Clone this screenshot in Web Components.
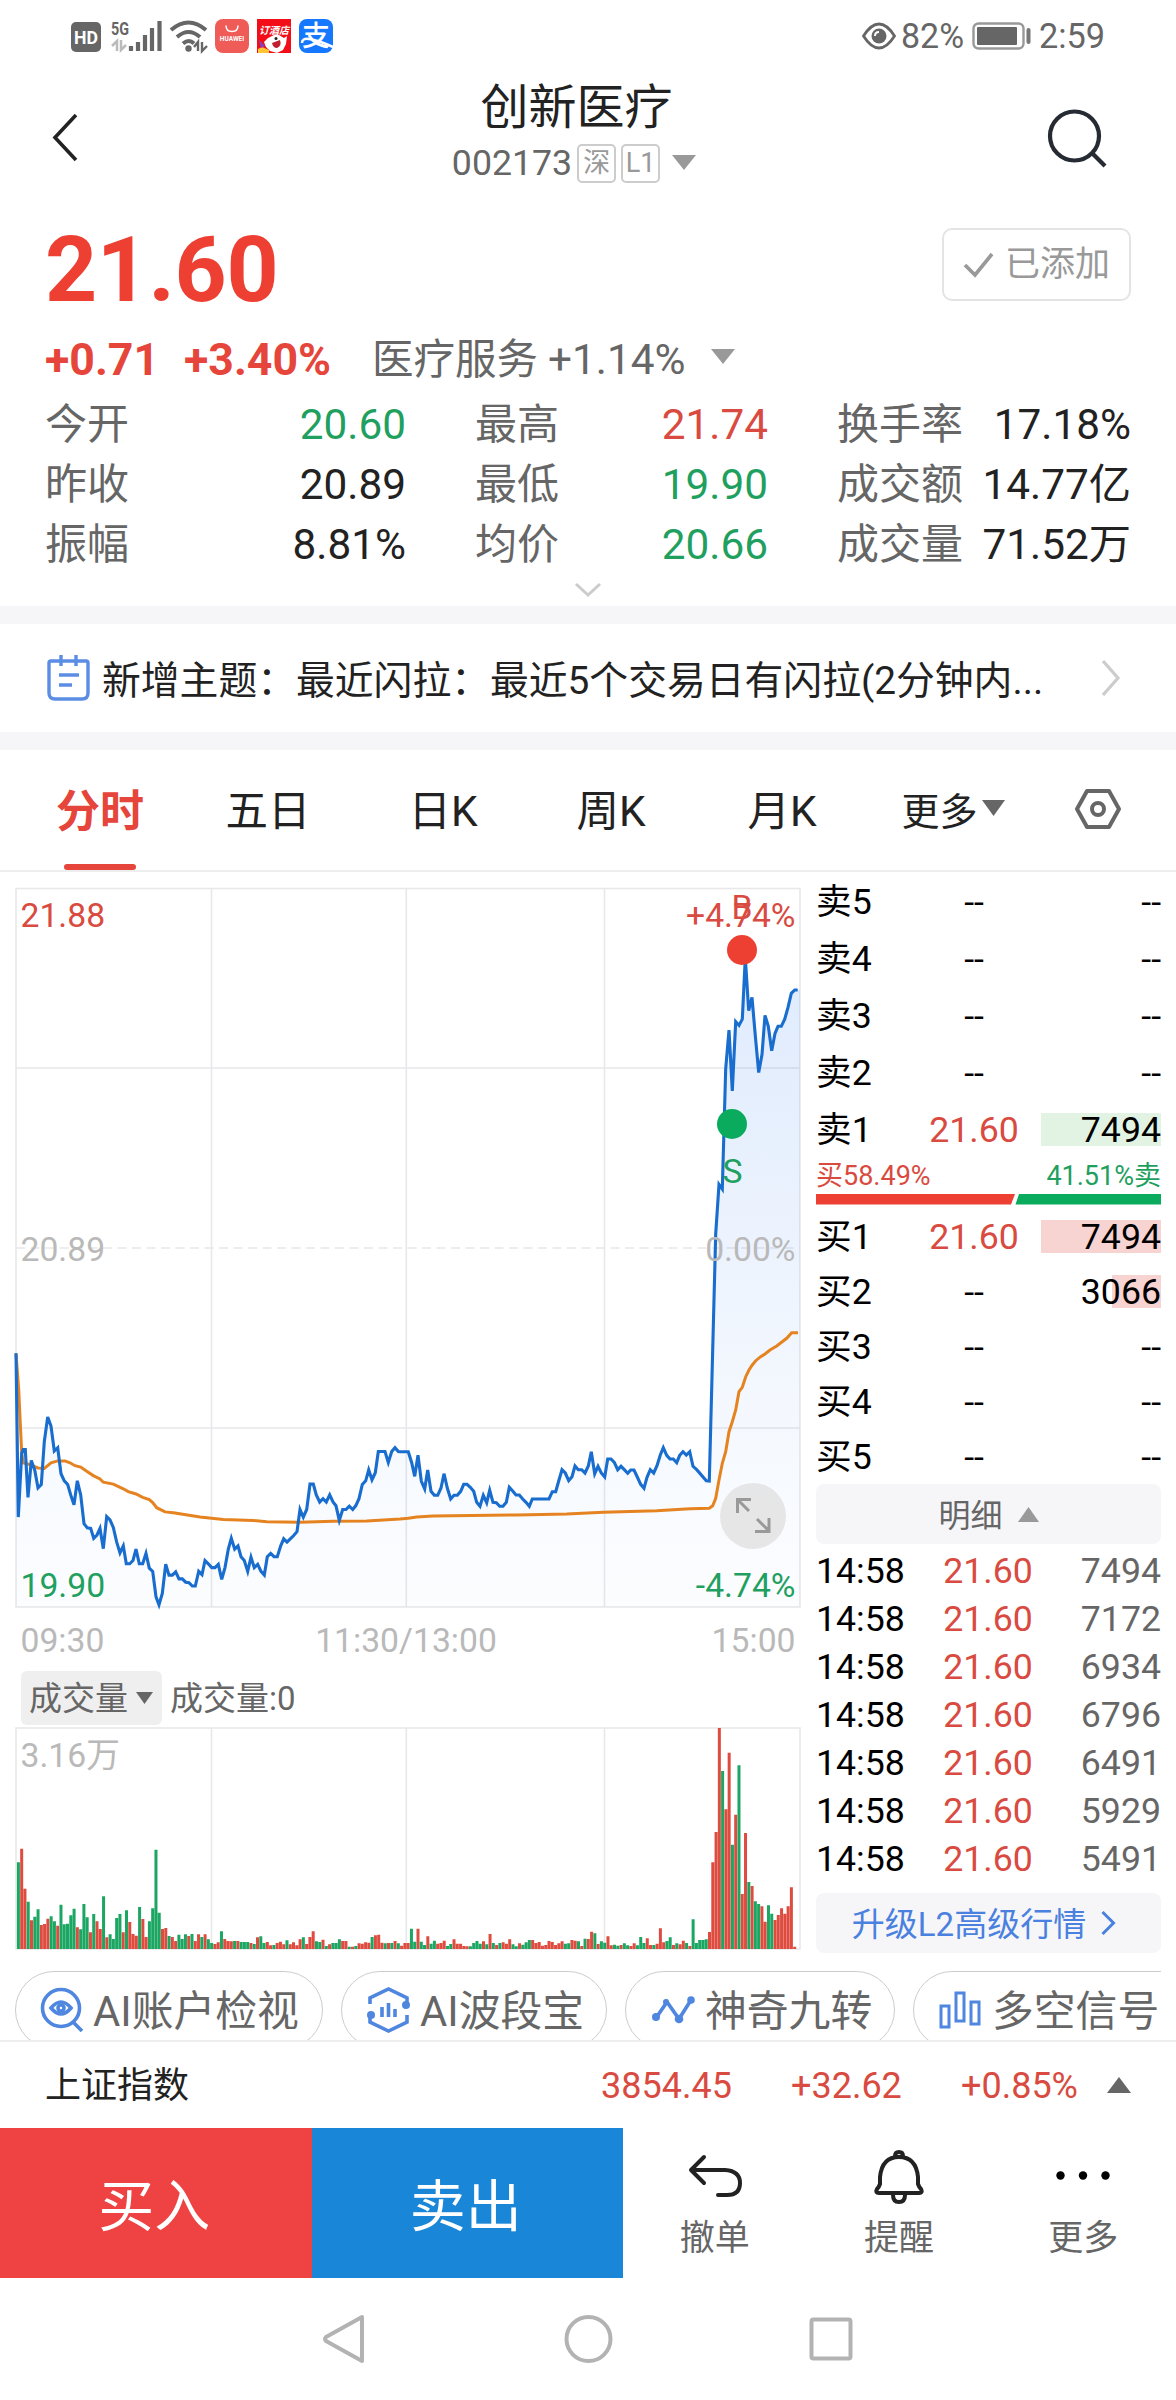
<!DOCTYPE html>
<html lang="zh-CN">
<head>
<meta charset="utf-8">
<title>创新医疗 002173</title>
<style>
  html, body { margin: 0; background: #fff; }
  body { width: 1176px; font-family: Roboto, "Noto Sans CJK SC", sans-serif; color: #222; }
</style>
</head>
<body>
<stock-app></stock-app>
<script>
const RED = '#d94a40', GREEN = '#1fa05f';

function define(name, css, html) {
  const t = document.createElement('template');
  t.innerHTML = `<style>*{box-sizing:border-box}svg{display:block;flex:none;overflow:visible}${css}</style>` +
    (typeof html === 'string' ? html : '');
  customElements.define(name, class extends HTMLElement {
    constructor() {
      super();
      this.attachShadow({ mode: 'open' }).append(t.content.cloneNode(true));
    }
    connectedCallback() {
      if (typeof html === 'function' && !this.ready) {
        this.ready = true;
        const box = document.createElement('template');
        box.innerHTML = html(this);
        this.shadowRoot.append(box.content);
      }
    }
  });
}

/* ---------- system bars ---------- */
define('status-bar', `
  :host{display:flex;height:72px;align-items:center;justify-content:space-between;padding:0 72px 0 71px;color:#666}
  .r{display:flex;align-items:center;font-size:35px;line-height:40px}
  .r span{transform-origin:left;white-space:nowrap;padding-top:2px}`, `
  <svg width="264" height="40" viewBox="71 16 264 40">
    <rect x="71" y="22" width="30" height="30" rx="5" fill="#666"/>
    <text x="86" y="44" font-size="19" font-weight="700" fill="#fff" text-anchor="middle" textLength="24" lengthAdjust="spacingAndGlyphs">HD</text>
    <text x="111" y="34.500" font-size="18" font-weight="700" fill="#666" textLength="18" lengthAdjust="spacingAndGlyphs">5G</text>
    <path d="M117 51V41l-5 5M121 40v10l5-5" stroke="#bbb" stroke-width="2.500" fill="none"/>
    <path d="M131 51v-5M138 51v-9M145 51v-16M152 51v-23M159.500 51v-30" stroke="#666" stroke-width="4.200" fill="none"/>
    <path d="M171 30q17.500-15 35 0M177 37q11.500-10 23 0M183 43.500q6-5 11 0" stroke="#666" stroke-width="4" fill="none"/>
    <circle cx="188.500" cy="48.500" r="3.200" fill="#666"/>
    <path d="M198 51V42l-4 5M202 42v9l5-5" stroke="#666" stroke-width="2.400" fill="none"/>
    <rect x="215" y="19" width="34" height="34" rx="8" fill="#ef5b57"/>
    <path d="M226 25.500q0 6 6 6t6-6" stroke="#fff" stroke-width="1.500" fill="none"/>
    <text x="232" y="41" font-size="6.500" font-weight="700" fill="#fff" text-anchor="middle">HUAWEI</text>
    <rect x="257" y="19" width="34" height="34" fill="#f20d18"/>
    <text x="274" y="34" font-size="10" font-weight="700" font-style="italic" fill="#fff" text-anchor="middle">订酒店</text>
    <path d="M264 42l4-4 6-3 5 0 5 3 3-2-1 8-3 6-6 3-7-2-4-4z" fill="#fff"/>
    <path d="M272 43l8-3q2 6-3 8-4 0-5-5z" fill="#c31d30"/>
    <circle cx="276" cy="38.500" r="1.500" fill="#222"/>
    <path d="M258 53v-4l4-2 7 3v3z" fill="#ffc634"/><path d="M259 40l6 6-4 2z" fill="#7c45c9"/>
    <rect x="299" y="19" width="34" height="34" rx="8" fill="#1677ff"/>
    <text x="316" y="46" font-size="28" font-weight="500" fill="#fff" text-anchor="middle">支</text>
    <path d="M302 43q0-5 7-4 9 1 24 8" stroke="#fff" stroke-width="2.500" fill="none"/>
  </svg>
  <div class="r">
    <svg width="34" height="28" viewBox="0 0 34 28"><path d="M1.500 14Q9 2 17 2t15.500 12Q25 26 17 26T1.500 14z" fill="none" stroke="#666" stroke-width="2.800"/><circle cx="17" cy="14" r="7.500" fill="#666"/><path d="M13 14q0-4 4-4" stroke="#fff" stroke-width="2" fill="none"/></svg>
    <span style="margin-left:5px;width:71px;transform:scaleX(.97)">82%</span>
    <svg width="60" height="28" viewBox="0 0 60 28"><rect x="1.500" y="1.500" width="50" height="25" rx="5" fill="none" stroke="#999" stroke-width="2.400"/><rect x="5" y="5" width="40" height="18" rx="1" fill="#666"/><path d="M56.500 8v12" stroke="#777" stroke-width="4" stroke-linecap="round"/></svg>
    <span style="margin-left:7px;width:65px;transform:scaleX(.98)">2:59</span>
  </div>`);

define('nav-keys', `
  :host{display:flex;height:122px;align-items:center;justify-content:center;gap:198px}
  svg{fill:none;stroke:#b3b3b3;stroke-width:4;stroke-linejoin:round}`, `
  <svg width="46" height="52" viewBox="0 0 46 52"><path d="M42 4v44L6 28q-2-2 0-4z"/></svg>
  <svg width="48" height="52" viewBox="0 0 48 52"><circle cx="24.500" cy="26" r="22"/></svg>
  <svg width="46" height="52" viewBox="0 0 46 52"><rect x="1.500" y="6.500" width="39" height="39" rx="2"/></svg>`);

/* ---------- header ---------- */
define('tag-box', `
  :host{display:flex;width:39px;height:39px;border:2px solid #ccc;border-radius:5px;align-items:center;justify-content:center;font-size:27px;line-height:36px;color:#999}`,
  `<slot></slot>`);

define('stock-header', `
  :host{display:flex;height:130px;justify-content:space-between;padding:0 71px 0 51px}
  .mid{display:flex;flex-direction:column;align-items:center;padding-left:12px}
  .name{font-size:48px;line-height:72px;height:66px;padding-left:13px}
  .code{display:flex;align-items:center;font-size:35.700px;line-height:46px;color:#666;gap:5px;margin-top:2px;padding-left:8px}
  .tri{margin-left:7px;margin-top:-2px}`, `
  <svg width="30" height="130" viewBox="0 0 30 130"><path d="M25 43L4 65.500 25 88" fill="none" stroke="#222" stroke-width="3.600"/></svg>
  <div class="mid">
    <div class="name">创新医疗</div>
    <div class="code"><span>002173</span><tag-box>深</tag-box><tag-box>L1</tag-box>
      <svg class="tri" width="24" height="15"><path d="M0 0h24L12 15z" fill="#999"/></svg></div>
  </div>
  <svg width="58" height="130" viewBox="1047 72 58 130"><circle cx="1074.500" cy="136" r="24.500" fill="none" stroke="#262b33" stroke-width="4.200"/><path d="M1092 153l13 13" stroke="#262b33" stroke-width="4.200"/></svg>`);

/* ---------- quote ---------- */
define('quote-cell', `
  :host{display:flex;justify-content:space-between;height:60px;line-height:62px;font-size:42px;color:#666;white-space:nowrap}
  .v{color:var(--c,#222);font-size:42.300px}`,
  el => `<span>${el.getAttribute('label')}</span><span class="v"><slot></slot></span>`);

define('quote-panel', `
  :host{display:block;height:404px;padding:0 45px}
  .top{display:flex;justify-content:space-between;padding-top:27px}
  .price{font-size:91px;font-weight:700;line-height:83px;height:80px;color:#ed4033;letter-spacing:-.4px}
  .add{display:flex;align-items:center;gap:11px;width:189px;height:73px;border:2px solid #e4e4e4;border-radius:10px;padding-left:19px;font-size:35px;color:#999;line-height:74px;white-space:nowrap;margin-top:-1px}
  .chg{display:flex;align-items:center;height:60px;line-height:60px;font-size:42px;white-space:nowrap;margin-top:21px}
  .chg b{color:#e5453a;font-size:44.600px;line-height:57px}
  .chg span{color:#666}
  .grid{display:grid;grid-template-columns:361px 293px 294px;column-gap:69px;margin-top:4px}
  .more{display:flex;justify-content:center;padding-top:9px}`, `
  <div class="top"><div class="price">21.60</div>
    <div class="add"><svg width="31" height="26"><path d="M2 13l10 10L29 2" stroke="#999" stroke-width="3.600" fill="none"/></svg>已添加</div></div>
  <div class="chg"><b style="width:139px">+0.71</b><b style="width:188px">+3.40%</b><span style="font-size:41.500px">医疗服务</span><span style="margin-left:10px;font-size:42.300px">+1.14%</span>
    <svg style="margin-left:26px;margin-top:-7px" width="24" height="15"><path d="M0 0h24L12 15z" fill="#999"/></svg></div>
  <div class="grid">
    <quote-cell label="今开" style="--c:${GREEN}">20.60</quote-cell><quote-cell label="最高" style="--c:${RED}">21.74</quote-cell><quote-cell label="换手率">17.18%</quote-cell>
    <quote-cell label="昨收">20.89</quote-cell><quote-cell label="最低" style="--c:${GREEN}">19.90</quote-cell><quote-cell label="成交额">14.77亿</quote-cell>
    <quote-cell label="振幅">8.81%</quote-cell><quote-cell label="均价" style="--c:${GREEN}">20.66</quote-cell><quote-cell label="成交量">71.52万</quote-cell>
  </div>
  <div class="more"><svg width="26" height="14"><path d="M1 1l12 11L25 1" fill="none" stroke="#ccc" stroke-width="3"/></svg></div>`);

define('news-bar', `
  :host{display:flex;height:144px;border:solid #f6f6f9;border-width:18px 0;align-items:center;padding:0 55px 0 47px;font-size:38.800px;line-height:56px}
  .t{margin-left:12px;flex:1;white-space:nowrap;padding-top:5px}`, `
  <svg width="43" height="46" viewBox="0 0 43 46"><path d="M2 8q0-2 2-2h35q2 0 2 2v30q0 6-6 6H8q-6 0-6-6z" fill="none" stroke="#5a8de3" stroke-width="3.400"/><path d="M14 0v11M29 0v11M12 20h20M12 30h13" stroke="#5a8de3" stroke-width="3.400"/></svg>
  <div class="t">新增主题：最近闪拉：最近5个交易日有闪拉(2分钟内...</div>
  <svg width="20" height="36"><path d="M2 1l15 17L2 35" fill="none" stroke="#ccc" stroke-width="3.200"/></svg>`);

define('chart-tabs', `
  :host{display:grid;grid-template-columns:168px 168px 182px 154px 188px 154px 136px;height:122px;padding:0 10px 0 16px;border-bottom:2px solid #eee;font-size:42.500px;line-height:124px;text-align:center}
  .on{color:#e5453a;font-weight:700;font-size:44px;display:flex;flex-direction:column;align-items:center}
  .on i{display:block;width:72px;height:6px;border-radius:3px;background:#e5453a;margin-top:-10px}
  .f{display:flex;align-items:center;justify-content:center;font-size:38px;gap:4px;height:120px}`, `
  <div class="on">分时<i></i></div><div>五日</div><div>日K</div><div>周K</div><div>月K</div>
  <div class="f"><span style="padding-top:3px">更多</span><svg style="margin-top:-4px" width="23" height="16"><path d="M0 0h23L11.500 16z" fill="#666"/></svg></div>
  <div class="f"><svg style="margin-top:-3px" width="46" height="40" viewBox="0 0 46 40"><path d="M12 2h22l10 18-10 18H12L2 20z" fill="none" stroke="#666" stroke-width="4" stroke-linejoin="round"/><circle cx="23" cy="20" r="6" fill="none" stroke="#666" stroke-width="4"/></svg></div>`);

/* ---------- intraday chart ---------- */
const project = (s, fx, fy) => s.trim().split(/\s+/).map(p => {
  const [x, y] = p.split(',').map(Number);
  return [fx(x), fy(y)];
});
const left = s => project(s, x => x / 3, y => 880 + y / 2.119);
const mid = s => project(s, x => 400 + x / 3, y => 1300 + y / 3);
const right = s => project(s, x => 600 + x / 3, y => 880 + y / 2.119);
const toPath = pts => 'M' + pts.map(p => p[0].toFixed(1) + ' ' + p[1].toFixed(1)).join('L');

const price = [
  ...left(`48,1003 55,1350 65,1215 70,1207 76,1207 84,1308 94,1230 104,1250 114,1288 124,1281 133,1190 143,1138 153,1157 163,1210 173,1203 183,1258 193,1273 203,1281 212,1303 222,1324 232,1273 242,1303 252,1364 262,1373 272,1374 281,1395 291,1388 300,1374 310,1417 320,1349 330,1356 340,1372 350,1403 360,1426 370,1411 379,1449 389,1449 399,1442 408,1418 418,1449 428,1449 438,1427 448,1458 458,1465 468,1519 477,1536 487,1512 497,1450 507,1473 517,1473 527,1466 537,1481 547,1481 557,1488 567,1489 577,1496 586,1496 596,1465 606,1472 615,1442 625,1449 635,1457 645,1457 655,1450 665,1482 675,1457 685,1418 694,1395 704,1418 714,1411 723,1434 733,1442 743,1465 753,1435 763,1457 773,1450 783,1465 793,1473 802,1434 812,1427 822,1434 832,1434 842,1411 851,1396 861,1403 871,1396 881,1389 891,1381 900,1334 910,1350 920,1334 930,1280 940,1280 949,1303 959,1318 969,1311 979,1318 989,1303 999,1318 1008,1326 1018,1357 1028,1334 1038,1334 1048,1327 1058,1334 1067,1326 1077,1311 1087,1281 1097,1273 1106,1250 1116,1271 1126,1256 1135,1211 1155,1211 1165,1234 1175,1211 1185,1203 1195,1211`),
  ...mid(`0,455 25,455 35,488 44,529 54,466 64,543 74,567 83,510 93,574 103,586 113,586 123,564 132,521 142,564 152,597 162,586 172,586 182,574 191,553 201,553 211,562 221,574 230,607 240,619 250,586 260,608 269,571 279,607 289,608 299,619 309,619 319,607 328,562 338,573 348,585 358,585 368,597 378,607 388,619 397,597 447,597 457,575 467,575 476,543 486,509 496,519 506,542 516,530 525,498 535,509 545,509 555,519 565,498 574,455 584,521 594,499 604,519 614,531 623,477 633,477 643,487 653,509 663,499 673,509 683,520 692,510 702,510 712,531 722,553 732,565 741,532 751,509 761,519 771,497 781,465 790,443 800,466 810,477 820,477 830,488 839,466 849,455 859,465 869,455 879,499 890,509 919,542 928,543`),
  ...right(`347,750 357,645 367,655 377,400 387,318 397,447 407,300 417,308 427,295 436,165 446,277 456,249 466,330 476,408 486,370 495,287 505,310 515,362 525,325 534,310 544,310 554,295 564,270 574,240 584,233 593,233`)
];
const average = [
  ...left(`48,1003 56,1080 65,1215 70,1235 85,1238 104,1243 114,1246 133,1247 143,1241 153,1235 173,1231 195,1231 210,1235 225,1241 242,1244 260,1253 280,1262 300,1269 310,1276 340,1280 370,1290 385,1296 408,1301 428,1308 448,1313 458,1319 470,1330 495,1339 520,1341 600,1350 670,1355 760,1357 800,1360 900,1361 1000,1359 1100,1358`),
  ...mid(`0,657 25,655 50,651 100,648 350,645 500,642 610,637 770,632 870,626 928,625 938,617 947,595 957,540 967,490 977,455 987,395 997,365 1007,330 1017,275 1027,262 1037,230 1047,210 1057,195 1067,182 1082,170 1095,162 1110,150 1130,138 1160,115 1175,98 1194,98`)
];

define('price-chart', `
  :host{display:block;height:772px}
  text{font-size:33.700px}
  .g{stroke:#e8e8ea;stroke-width:1.600;fill:none}`, `
  <svg width="806" height="772" viewBox="0 888 806 772">
    <defs><linearGradient id="a" gradientUnits="userSpaceOnUse" x1="0" y1="960" x2="0" y2="1607"><stop offset="0" stop-color="#1a6ef0" stop-opacity=".14"/><stop offset=".75" stop-color="#1a6ef0" stop-opacity=".04"/><stop offset="1" stop-color="#1a6ef0" stop-opacity=".015"/></linearGradient></defs>
    <path class="g" d="M16 888.500H800V1607H16zM16 1068H800M16 1428H800M211.500 888.500V1607M406.300 888.500V1607M604.500 888.500V1607"/>
    <path class="g" d="M16 1248H800" stroke-dasharray="9 5.500"/>
    <path d="${toPath(price)}H800V1607H16z" fill="url(#a)"/>
    <path d="${toPath(average)}" fill="none" stroke="#e58321" stroke-width="3"/>
    <path d="${toPath(price)}" fill="none" stroke="#186dce" stroke-width="3.100"/>
    <g fill="${RED}"><text x="20.500" y="926.500">21.88</text><text x="795.500" y="926.500" text-anchor="end">+4.74%</text><text x="742" y="918.500" text-anchor="middle">B</text></g>
    <g fill="#b9b9b9"><text x="20.500" y="1261">20.89</text><text x="795.500" y="1261" text-anchor="end">0.00%</text>
      <text x="20.500" y="1651.500">09:30</text><text x="406" y="1651.500" text-anchor="middle">11:30/13:00</text><text x="795.500" y="1651.500" text-anchor="end">15:00</text></g>
    <circle cx="742" cy="950" r="15" fill="#ed4033"/><circle cx="732" cy="1124" r="15" fill="#0aab5d"/>
    <circle cx="753" cy="1516" r="33" fill="#e2e2e4" fill-opacity=".88"/>
    <path d="M737.500 1513v-13.500h13.500M738 1500l11 11M755 1531.500h14v-13.500M769 1531l-12-12" fill="none" stroke="#999" stroke-width="3"/>
    <g fill="${GREEN}"><text x="732.500" y="1182.500" text-anchor="middle">S</text><text x="20.500" y="1596.500">19.90</text><text x="795.500" y="1596.500" text-anchor="end">-4.74%</text></g>
  </svg>`);

/* Volume bars: direction letter, then the top edge above a per-session baseline. */
const morning = 'G757 R716 R836 G875 R931 G920 G898 R945 R942 R926 G919 G934 R947 G884 G943 G941 G916 G896 R952 G958 G882 G922 R967 G912 R934 R957 G859 R982 G973 G987 G924 G912 R967 G901 R936 R972 R977 G891 R927 R981 G934 G895 G719 G908 R957 R954 G978 R981 R993 G974 G987 G973 R978 G972 R993 R973 G981 R973 G988 G999 R1002 R997 G964 R987 R993 R994 G993 R993 G996 G996 G996 R999 G1002 R982 G979 G999 R996 R1006 G1005 R999 R995 R1003 G991 R1003 R997 R1006 R988 G982 R1002 R981 R964 G994 G996 R989 G1008 R1003 G999 G999 G988 R993 R993 G1010 R1010 G1008 R1000 R1001 R997 R998 G981 R976 R974 R998 G1000 R999 G999 R993 G1000';
const afternoon = 'R737 R729 R729 G686 G725 R686 G725 G735 R709 G731 G722 R731 R729 R722 G738 G732 R718 R731 R731 R738 R739 G739 G729 G723 G731 R724 G733 R702 G729 R735 G729 R727 R731 R718 G733 G739 R730 G734 G727 G720 R720 R729 R726 R737 R735 R723 R726 R735 R730 R724 G731 G730 R720 R722 G724 R738 G716 R717 R695 G700 R732 G724 G728 R709 R736 G734 G737 R735 G730 G736 R738 R730 G736 G711 G729 R715 R735 G735 R731 R685 R727 G723 G712 R735 G730 R733 R722 G729 R738 G658 G729 G720 G720 G718 R696 R487 R396 R84 G213 R328 R158 G434 R344 G196 R582 R399 G546 R558 G604 G612 R619 R665 G616 G641 R660 R645 R625 R641 R619 R562 R740';
const bars = [...morning.split(' ').map(t => [t[0], (1017 - t.slice(1)) / 3]),
              ...afternoon.split(' ').map(t => [t[0], (747 - t.slice(1)) / 3])];
const barPath = dir => bars.map(([d, h], i) => d === dir ? `M${(18.4 + i * 3.2754).toFixed(2)} 1949v${(-h).toFixed(1)}` : '').join('');

define('volume-chart', `
  :host{display:block;height:311px}
  .bar{display:flex;align-items:center;height:66px;padding:0 0 0 21px;font-size:33px;line-height:50px;color:#666;white-space:nowrap}
  .pick{display:flex;align-items:center;gap:8px;width:141px;height:54px;border-radius:6px;background:#efefef;padding-left:8px;margin-right:8px}
  span{padding-top:2px}
  .plot{margin-top:-5px}
  text{font-size:33.700px}`, `
  <div class="bar"><div class="pick"><span>成交量</span><svg width="17" height="12"><path d="M0 0h17L8.500 12z" fill="#666"/></svg></div><span>成交量:0</span></div>
  <svg class="plot" width="806" height="226" viewBox="0 1726 806 226">
    <path d="M16 1728H800V1949H16zM211.500 1728V1949M406.300 1728V1949M604.500 1728V1949" fill="none" stroke="#e8e8ea" stroke-width="1.600"/>
    <text x="20.500" y="1766.500" fill="#b9b9b9">3.16万</text>
    <path d="${barPath('R')}" stroke="#de4b3f" stroke-width="3"/><path d="${barPath('G')}" stroke="#1ba662" stroke-width="3"/>
  </svg>`);

/* ---------- order book ---------- */
define('book-row', `
  :host{display:grid;grid-template-columns:100px 116px 129px;align-items:center;height:var(--h,57px);font-size:35.700px;line-height:46px;color:#000;white-space:nowrap}
  .p{text-align:center}.v{text-align:right;justify-self:end;width:120px;height:33px;line-height:34px}`,
  el => {
    const [name, p, v, fill, w] = el.getAttribute('row').split('|');
    const bg = fill ? `background:linear-gradient(${fill},${fill}) right/${w}px 100% no-repeat` : '';
    return `<span>${name}</span><span class="p" style="${p === '--' ? '' : 'color:' + RED}">${p}</span><span class="v" style="${bg}">${v}</span>`;
  });

define('tick-row', `
  :host{display:grid;grid-template-columns:116px 112px 117px;align-items:center;height:48px;font-size:35.700px;line-height:48px;color:#000}
  .p{text-align:center;color:${RED}}.v{text-align:right;color:#666}`,
  el => `<span>14:58</span><span class="p">21.60</span><span class="v">${el.getAttribute('v')}</span>`);

define('order-book', `
  :host{display:block;width:345px}
  .pct{display:flex;justify-content:space-between;height:34px;line-height:37px;font-size:27px;white-space:nowrap}
  .box{display:flex;align-items:center;justify-content:center;height:60px;border-radius:8px;background:#f6f6f9;font-size:32px;line-height:60px;color:#666;gap:15px}
  .box span{padding-top:3px}
  .ticks{height:349px;padding-top:3px}`, `
  ${[5, 4, 3, 2].map(n => `<book-row row="卖${n}|--|--"></book-row>`).join('')}
  <book-row row="卖1|21.60|7494|#e2f2e3|120"></book-row>
  <div class="pct"><span style="color:${RED}">买58.49%</span><span style="color:${GREEN}">41.51%卖</span></div>
  <svg style="margin-top:1px;margin-bottom:4px" width="345" height="12"><path d="M0 1h199l-4 10.500H0z" fill="#ed4033"/><path d="M203 1h142v10.500H199.500z" fill="#0aab5d"/></svg>
  <book-row style="--h:55px" row="买1|21.60|7494|#f7d3d2|120"></book-row>
  <book-row style="--h:55px" row="买2|--|3066|#f7d3d2|49"></book-row>
  ${[3, 4, 5].map(n => `<book-row style="--h:55px" row="买${n}|--|--"></book-row>`).join('')}
  <div class="box"><span>明细</span><svg width="21" height="15"><path d="M0 15h21L10.500 0z" fill="#999"/></svg></div>
  <div class="ticks">${[7494, 7172, 6934, 6796, 6491, 5929, 5491].map(v => `<tick-row v="${v}"></tick-row>`).join('')}</div>
  <div class="box" style="font-size:33px;color:#4a80de;padding-right:10px"><span>升级L2高级行情</span><svg width="14" height="24"><path d="M1.500 1l11 11-11 11" fill="none" stroke="#4a80de" stroke-width="3"/></svg></div>`);

define('chart-zone', `
  :host{display:flex;height:1099px;gap:10px}
  .l{width:806px;padding-top:16px}
  order-book{margin-top:1px}`, `
  <div class="l"><price-chart></price-chart><volume-chart style="margin-top:5px"></volume-chart></div>
  <order-book></order-book>`);

/* ---------- tool chips ---------- */
define('tool-chip', `
  :host{display:flex;flex:none;align-items:center;height:78px;border:1.500px solid #ccc;border-radius:39px;font-size:41.800px;line-height:76px;color:#666;white-space:nowrap;gap:10px}
  span{padding-top:3px}`,
  `<slot name="icon"></slot><span><slot></slot></span>`);

define('tool-strip', `
  :host{display:flex;height:69px;margin:0 15px;overflow:hidden;gap:18px;align-items:flex-start}
  g{fill:none;stroke:#4f86df;stroke-width:3.600}`, `
  <tool-chip style="width:308px;padding-left:24px"><svg slot="icon" width="43" height="44" viewBox="0 0 43 44"><g><circle cx="21" cy="20" r="18.500"/><path d="M33 34l9 9M11 20q10-12 20 0-10 12-20 0z"/><circle cx="21" cy="20" r="3"/></g></svg>AI账户检视</tool-chip>
  <tool-chip style="width:266px;padding-left:25px"><svg slot="icon" width="43" height="46" viewBox="0 0 43 46"><g><path d="M3 17V11L21.500 2 40 11v5M40 28v7L21.500 44 3 35v-5M15 20v10M21.500 16v14M28 22v8"/></g><circle cx="39" cy="18" r="4" fill="#4f86df"/><circle cx="4" cy="28" r="4" fill="#4f86df"/></svg>AI波段宝</tool-chip>
  <tool-chip style="width:270px;padding-left:26px"><svg slot="icon" width="43" height="28" viewBox="0 0 43 28"><g><path d="M4 22L15 6l12 17L39 4"/></g><g style="fill:#4f86df;stroke:none"><circle cx="4" cy="21" r="4"/><circle cx="14" cy="6" r="3"/><circle cx="27" cy="23" r="4.300"/><circle cx="39" cy="4" r="3.800"/></g></svg>神奇九转</tool-chip>
  <tool-chip style="width:292px;padding-left:25px"><svg slot="icon" width="43" height="38" viewBox="0 0 43 38"><g style="stroke-width:3"><rect x="2" y="15" width="8" height="21"/><rect x="17" y="2" width="8" height="28"/><rect x="32" y="11" width="8" height="22"/></g></svg>多空信号</tool-chip>`);

/* ---------- index row and actions ---------- */
define('index-row', `
  :host{display:grid;grid-template-columns:556px 190px 170px 146px 24px;height:88px;border-top:2px solid #eee;padding:0 45px;font-size:36px;line-height:89px;color:${RED};align-items:center}
  .name{color:#222}`, `
  <span class="name">上证指数</span><span>3854.45</span><span>+32.62</span><span>+0.85%</span>
  <svg style="margin-top:-3px" width="24" height="16"><path d="M0 16h24L12 0z" fill="#666"/></svg>`);

define('action-item', `
  :host{display:flex;flex-direction:column;align-items:center;flex:1;font-size:35px;line-height:50px;color:#666;padding-top:20px;padding-right:1px}`,
  `<slot name="icon"></slot><slot></slot>`);

define('action-bar', `
  :host{display:flex;height:150px}
  .b{width:311.500px;color:#fff;font-size:56px;line-height:158px;text-align:center;padding-right:3px}
  g{fill:none;stroke:#222;stroke-width:4;stroke-linecap:round;stroke-linejoin:round}`, `
  <div class="b" style="background:#ee4243">买入</div><div class="b" style="background:#1986d7">卖出</div>
  <action-item><svg slot="icon" width="60" height="66" viewBox="685 2148 60 66"><g><path d="M704 2157l-13 13 13 13M691 2170h34q15 1 15 13 0 12-13 12h-9"/></g></svg>撤单</action-item>
  <action-item><svg slot="icon" width="60" height="66" viewBox="869 2148 60 66"><g><path d="M895 2156q0-4 4-4t4 4M899 2157q17 0 19 20v7q1 3 3 5 2 4-2 4h-40q-4 0-2-4 2-2 3-5v-7q2-20 19-20zM893 2195q0 7 6 7t6-7"/></g></svg>提醒</action-item>
  <action-item><svg slot="icon" width="60" height="66" viewBox="1053 2148 60 66"><circle cx="1060.500" cy="2175.500" r="4.200"/><circle cx="1083" cy="2175.500" r="4.200"/><circle cx="1105.500" cy="2175.500" r="4.200"/></svg>更多</action-item>`);

define('stock-app', `:host{display:block;width:1176px;height:2400px;overflow:hidden;background:#fff}`, `
  <status-bar></status-bar><stock-header></stock-header><quote-panel></quote-panel><news-bar></news-bar>
  <chart-tabs></chart-tabs><chart-zone></chart-zone><tool-strip></tool-strip><index-row></index-row>
  <action-bar></action-bar><nav-keys></nav-keys>`);
</script>
</body>
</html>
